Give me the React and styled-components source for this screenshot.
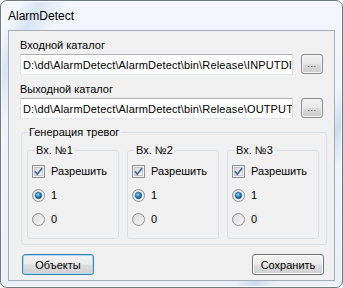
import React, { useId } from 'react';
import styled, { createGlobalStyle } from 'styled-components';

const inputs = ['Вх. №1', 'Вх. №2', 'Вх. №3'];

const folders = [
	{ label: 'Входной каталог', path: 'D:\\dd\\AlarmDetect\\AlarmDetect\\bin\\Release\\INPUTDIR' },
	{ label: 'Выходной каталог', path: 'D:\\dd\\AlarmDetect\\AlarmDetect\\bin\\Release\\OUTPUTDIR' }
];

function CheckMark() {
	const id = useId();
	return (
		<svg width="13" height="13" viewBox="0 0 13 13">
			<defs>
				<linearGradient id={id} x1="0" y1="0" x2="1" y2="1">
					<stop offset="0" stopColor="#d8d8d8" />
					<stop offset="1" stopColor="#fbfbfb" />
				</linearGradient>
			</defs>
			<rect x="0.5" y="0.5" width="12" height="12" fill="#f4f4f4" stroke="#8e8f8f" />
			<rect x="2.5" y="2.5" width="8" height="8" fill={`url(#${id})`} stroke="#c2c6cc" />
			<path d="M3 6.2 L5.3 9.2 L10 3.2" fill="none" stroke="#4a5e96" strokeWidth="1.7" />
		</svg>
	);
}

function RadioMark({ checked }) {
	const id = useId();
	return (
		<svg width="13" height="13" viewBox="0 0 13 13">
			<defs>
				<linearGradient id={`${id}a`} x1="0" y1="0" x2="1" y2="1">
					<stop offset="0" stopColor="#d6d6d6" />
					<stop offset="1" stopColor="#fafafa" />
				</linearGradient>
				<radialGradient id={`${id}b`} cx="0.4" cy="0.35" r="0.65">
					<stop offset="0" stopColor="#8fe0ff" />
					<stop offset="0.5" stopColor="#2a8fd0" />
					<stop offset="1" stopColor="#124a7c" />
				</radialGradient>
			</defs>
			<circle cx="6.5" cy="6.5" r="6" fill={`url(#${id}a)`} stroke="#8e8f8f" />
			{checked && <circle cx="6.5" cy="6.5" r="3.2" fill={`url(#${id}b)`} stroke="#1d4d78" strokeWidth="0.6" />}
		</svg>
	);
}

function InputGroup({ title }) {
	return (
		<InnerGroup>
			<Legend>{title}</Legend>
			<OptionRow>
				<CheckMark />
				<span>Разрешить</span>
			</OptionRow>
			<OptionRow>
				<RadioMark checked />
				<span>1</span>
			</OptionRow>
			<OptionRow>
				<RadioMark />
				<span>0</span>
			</OptionRow>
		</InnerGroup>
	);
}

export default function App() {
	return (
		<>
			<GlobalStyle />
			<Window>
				<TitleBar>AlarmDetect</TitleBar>
				<Client>
					{folders.map((f, i) => (
						<Field key={f.label} first={i === 0}>
							<Label>{f.label}</Label>
							<PathRow>
								<PathInput value={f.path} readOnly />
								<BrowseButton>...</BrowseButton>
							</PathRow>
						</Field>
					))}
					<OuterGroup>
						<Legend>Генерация тревог</Legend>
						<InputsGrid>
							{inputs.map((t) => (
								<InputGroup key={t} title={t} />
							))}
						</InputsGrid>
					</OuterGroup>
					<Footer>
						<Button primary>Объекты</Button>
						<Button>Сохранить</Button>
					</Footer>
				</Client>
			</Window>
		</>
	);
}

const GlobalStyle = createGlobalStyle`
	html, body {
		margin: 0;
		padding: 0;
		background: #ffffff;
	}
	body {
		font-family: "Liberation Sans", Arial, sans-serif;
	}
`;

const Window = styled.div`
	width: 343px;
	height: 288px;
	box-sizing: border-box;
	display: flex;
	flex-direction: column;
	border: 1px solid #6c7886;
	border-radius: 7px;
	box-shadow: inset 0 0 0 1px rgba(255, 255, 255, 0.8);
	background:
		linear-gradient(118deg, transparent 0%, transparent 78%, rgba(190, 210, 232, 0.7) 82%, transparent 86%),
		linear-gradient(118deg, transparent 0%, transparent 4%, rgba(200, 216, 236, 0.6) 8%, transparent 14%),
		linear-gradient(180deg, #f3f7fc 0%, #e9f0f8 100%);
	overflow: hidden;
`;

const TitleBar = styled.div`
	height: 29px;
	padding-left: 7px;
	display: flex;
	align-items: center;
	font-size: 12px;
	color: #000;
`;

const Client = styled.div`
	margin: 0 7px 0 7px;
	width: 327px;
	box-sizing: border-box;
	padding: 7px 11px 5px 11px;
	background: #f0f0f0;
	border: 1px solid #a3adb9;
	font-size: 11px;
	color: #000;
`;

const Field = styled.div`
	margin-top: ${(p) => (p.first ? '0' : '7px')};
`;

const Label = styled.div`
	line-height: 14px;
	height: 14px;
	margin-bottom: 2px;
`;

const PathRow = styled.div`
	display: flex;
	align-items: flex-start;
`;

const PathInput = styled.input`
	width: 273px;
	height: 21px;
	box-sizing: border-box;
	margin: 0;
	padding: 0 0 0 2px;
	border: 1px solid #dbdfe6;
	border-top-color: #abadb3;
	border-bottom-color: #e3e9ef;
	background: #fff;
	font-family: "Liberation Sans", Arial, sans-serif;
	font-size: 11px;
	letter-spacing: 0.15px;
	color: #000;
	outline: none;
`;

const BrowseButton = styled.div`
	margin-left: 8px;
	width: 22px;
	height: 20px;
	box-sizing: border-box;
	border: 1px solid #8c8c8c;
	border-radius: 3px;
	box-shadow: inset 0 0 0 1px #f6f6f6;
	background: linear-gradient(180deg, #f0f0f0 0%, #e8e8e8 45%, #d8d8d8 55%, #cdcdcd 100%);
	display: flex;
	align-items: center;
	justify-content: center;
	font-size: 9px;
	color: #333;
	letter-spacing: 0.5px;
`;

const Legend = styled.legend`
	padding: 0 2px;
	margin-left: 0;
	line-height: 14px;
	height: 14px;
`;

const OuterGroup = styled.fieldset`
	margin: 6px 0 0 1px;
	width: 306px;
	min-width: 0;
	box-sizing: border-box;
	padding: 4px 7px 5px 5px;
	border: 1px solid #d5dfe5;
	border-radius: 3px;
`;

const InputsGrid = styled.div`
	display: grid;
	grid-template-columns: repeat(3, 92px);
	column-gap: 8px;
`;

const InnerGroup = styled.fieldset`
	margin: 0;
	min-width: 0;
	box-sizing: border-box;
	padding: 2px 4px 7px 4px;
	border: 1px solid #d5dfe5;
	border-radius: 3px;

	& > legend {
		margin-left: 2px;
	}
`;

const OptionRow = styled.div`
	height: 24px;
	display: flex;
	align-items: center;
	gap: 6px;

	& svg {
		flex: none;
	}
`;

const Footer = styled.div`
	margin: 9px -1px 0 2px;
	display: flex;
	justify-content: space-between;
`;

const Button = styled.div`
	width: 72px;
	height: 21px;
	box-sizing: border-box;
	border: 1px solid ${(p) => (p.primary ? '#3c7fb1' : '#707070')};
	border-radius: 3px;
	box-shadow: inset 0 0 0 1px ${(p) => (p.primary ? '#a6dcf6' : '#fbfbfb')};
	background: linear-gradient(180deg, #f2f2f2 0%, #ebebeb 48%, #dddddd 52%, #cfcfcf 100%);
	display: flex;
	align-items: center;
	justify-content: center;
	font-size: 11px;
	color: #000;
`;
